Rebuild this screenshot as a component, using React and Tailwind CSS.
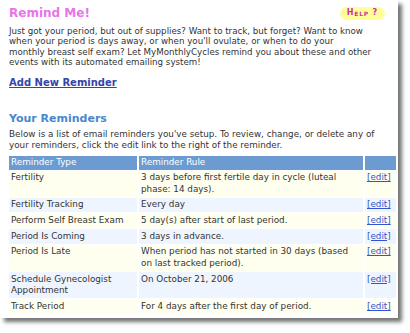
import React from "react";

const reminders = [
  { type: "Fertility", rule: "3 days before first fertile day in cycle (luteal phase: 14 days)." },
  { type: "Fertility Tracking", rule: "Every day" },
  { type: "Perform Self Breast Exam", rule: "5 day(s) after start of last period." },
  { type: "Period Is Coming", rule: "3 days in advance." },
  { type: "Period Is Late", rule: "When period has not started in 30 days (based\non last tracked period)." },
  { type: "Schedule Gynecologist Appointment", rule: "On October 21, 2006" },
  { type: "Track Period", rule: "For 4 days after the first day of period." },
];

function App() {
  return (
    <div className="w-[410px] h-[333px] bg-white overflow-hidden font-['DejaVu_Sans',Verdana,sans-serif] text-[#333333]">
      <div className="w-[398px] h-[318px] bg-white shadow-[4px_4px_4px_rgba(0,0,0,0.55)] px-[9px] pt-[6px]">
        <div className="flex items-center justify-between">
          <h1 className="text-[12px] font-bold text-[#e874e8] leading-[14px]">Remind Me!</h1>
          <span className="bg-[#ffff99] rounded-full px-[7px] h-[13px] flex items-center text-[8px] font-bold text-[#cc3399] tracking-[0.8px] mr-[4px]">
            H<span className="text-[6px]">ELP</span>&nbsp;?
          </span>
        </div>

        <p className="text-[8.7px] leading-[10.4px] mt-[6px] whitespace-nowrap">
          Just got your period, but out of supplies? Want to track, but forget? Want to know
          <br />
          when your period is days away, or when you'll ovulate, or when to do your
          <br />
          monthly breast self exam? Let MyMonthlyCycles remind you about these and other
          <br />
          events with its automated emailing system!
        </p>

        <a href="#" className="block mt-[9px] text-[10px] font-bold text-[#3344aa] underline leading-[12px]">
          Add New Reminder
        </a>

        <h2 className="mt-[23px] text-[11px] font-bold text-[#4a88cc] leading-[13px]">Your Reminders</h2>

        <p className="text-[8.8px] leading-[11px] mt-[4px]">
          Below is a list of email reminders you've setup. To review, change, or delete any of your reminders, click the edit link to the right of the reminder.
        </p>

        <table className="w-[391px] mt-[4px] border-separate border-spacing-x-[2px] border-spacing-y-[1px] -mx-[2px] text-[8.8px] leading-[11.5px]">
          <thead>
            <tr className="bg-[#6b9bd1] text-white">
              <th className="text-left font-normal px-[2px] py-[1.2px] w-[128px]">Reminder Type</th>
              <th className="text-left font-normal px-[2px] py-[1.2px]">Reminder Rule</th>
              <th className="w-[31px]"></th>
            </tr>
          </thead>
          <tbody>
            {reminders.map((r, i) => (
              <tr key={r.type} className={i % 2 === 0 ? "bg-[#fffff0]" : "bg-[#eef5ff]"}>
                <td className="align-top px-[2px] py-[1.6px]">{r.type}</td>
                <td className="align-top px-[2px] py-[1.6px] whitespace-pre-line">{r.rule}</td>
                <td className="align-top px-[2px] py-[1.6px]">
                  <a href="#" className="text-[#3355cc] underline">[edit]</a>
                </td>
              </tr>
            ))}
          </tbody>
        </table>
      </div>
    </div>
  );
}

export default App;
